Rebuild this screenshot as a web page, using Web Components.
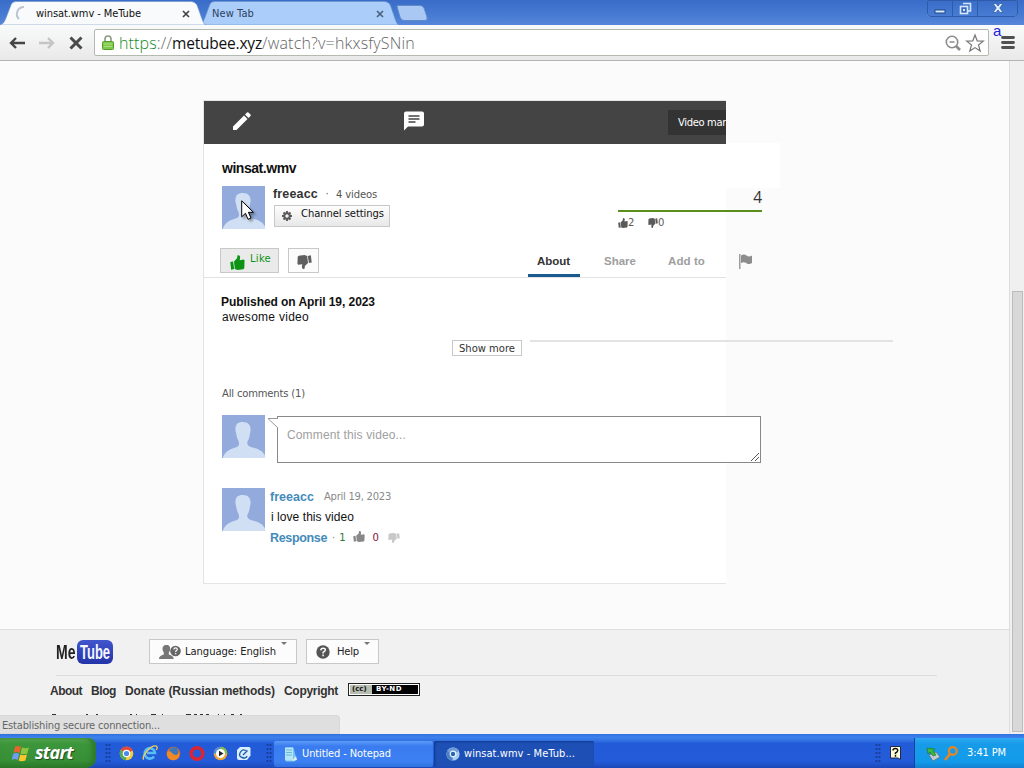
<!DOCTYPE html>
<html lang="en">
<head>
<meta charset="utf-8">
<title>winsat.wmv - MeTube</title>
<style>
    html, body {
        margin: 0;
        width: 1024px;
        height: 768px;
        overflow: hidden;
        background: #fcfcfc;
    }
</style>
</head>
<body>
<desktop-window></desktop-window>

<script>
const TAHOMA = `"DejaVu Sans Condensed", "DejaVu Sans", sans-serif`;
const VERDANA = `"DejaVu Sans", sans-serif`;
const ARIAL = `"Liberation Sans", Arial, sans-serif`;

const THUMB = `<path d="M.3 7.500l3.200-.6L4.800 15l-3.500.6zM4.500 7L8 3.500 8.500.3q3-.8 3 2.400L11 5.500l4.500-.7 1 .9-.3 8.300-1.200 1.200-6.500.8-3-1z"/>`;

const icons = {
    spinner: [16, 16, `<path d="M8 1A7 7 0 0 0 3 13" fill="none" stroke="#b9c5d4" stroke-width="2"/>`],
    close: [8, 8, `<path d="M1 1l6 6M7 1L1 7" stroke="currentColor" stroke-width="1.7"/>`],
    back: [16, 12, `<path d="M7 1L2 6l5 5M2 6h14" fill="none" stroke="currentColor" stroke-width="2.4"/>`],
    forward: [16, 12, `<path d="M9 1l5 5-5 5M14 6H0" fill="none" stroke="currentColor" stroke-width="2.4"/>`],
    stop: [14, 14, `<path d="M1.500 1.500l11 11M12.500 1.500l-11 11" stroke="#4a4a4a" stroke-width="3"/>`],
    lock: [12, 15, `<path d="M3 7V4a3 3 0 0 1 6 0v3" fill="none" stroke="#8d9a80" stroke-width="1.600"/><rect x=".5" y="6.500" width="11" height="8" rx="1" fill="#7fc84c" stroke="#55a02c"/><path d="M2 9h8M2 11.500h8" stroke="#a9e07e"/>`],
    zoom: [16, 16, `<circle cx="7" cy="7" r="5.700" fill="none" stroke="#8c8c8c" stroke-width="1.600"/><path d="M4.500 7h5" stroke="#8c8c8c" stroke-width="1.500"/><path d="M11 11l4 4" stroke="#8c8c8c" stroke-width="2.600"/>`],
    star: [18, 18, `<path d="M9 1l2.200 5.800 6.100.3-4.800 3.900 1.700 6L9 13.600 3.800 17l1.700-6L.7 7.100l6.100-.3z" fill="#fff" stroke="#777" stroke-width="1.200"/>`],
    menu: [14, 13, `<path d="M1.500 1.500h11M1.500 6.500h11M1.500 11.500h11" stroke="#505050" stroke-width="2.800" stroke-linecap="round"/>`],
    minimize: [12, 12, `<rect x="1" y="8" width="10" height="3" fill="#dcecff" stroke="#1d4689"/>`],
    restore: [13, 13, `<path d="M4 1.500h7.500V9H9" fill="none" stroke="#d5e8ff" stroke-width="1.600"/><rect x="1.500" y="4.500" width="7" height="7" fill="#3568bd" stroke="#d5e8ff" stroke-width="1.600"/><rect x="4" y="7" width="2" height="2" fill="#d5e8ff"/>`],
    cross: [12, 12, `<path d="M1 1.500h3l2 2.500 2-2.500h3L7.800 6l3.200 4.500H8L6 8l-2 2.500H1L4.200 6z" fill="#dcecff" stroke="#2a579f" stroke-width=".7"/>`],
    pencil: [18, 18, `<path d="M0 14.500L11 3.500l3.500 3.500-11 11H0zM12 2.500L14 .5q.7-.6 1.400 0L17.500 2.600q.6.700 0 1.400l-2 2z" fill="#fff"/>`],
    message: [20, 20, `<path d="M2 .5h16q2 0 2 2v11q0 2-2 2H4L0 19.500v-17q0-2 2-2z" fill="#fff"/><path d="M4.500 5h11M4.500 8h11M4.500 11h7" stroke="#444" stroke-width="1.400"/>`],
    gear: [10, 10, `<path d="M5 0v10M0 5h10M1.500 1.500l7 7M8.500 1.500l-7 7" stroke="#5a5a5a" stroke-width="1.900"/><circle cx="5" cy="5" r="2.700" fill="#f1f1f1" stroke="#5a5a5a" stroke-width="1.900"/>`],
    up: [17, 16, THUMB],
    down: [17, 16, `<g transform="rotate(180 8.500 8)">${THUMB}</g>`],
    flag: [14, 15, `<path d="M.8 0v15" stroke="#8d8d8d" stroke-width="1.300"/><path d="M2 1.500q3-2 5.500 0t5.500 0V9q-3 2-5.500.2T2 9z" fill="#8d8d8d"/>`],
    grip: [8, 8, `<path d="M0 8l8-8M4 8l4-4" stroke="#555"/>`],
    pointer: [11, 11, `<path d="M11 .5H1L11 10" fill="#fff" stroke="#999"/>`],
    avatar: [43, 43, `<rect width="43" height="43" fill="#92abdc"/><path d="M21 7c6 0 8 4 7.500 9l-1 5c-.4 4-2 4-2.300 7 .5 3 3 4 7 5 6 1.500 9 4 11 8v2H1v-1c2-4.500 5-7 11-9 4-1 5-2 5-5-.4-3-2-4-2.500-8l-1-4C13 10 15 7 21 7z" fill="#d0dff3"/>`],
    cursor: [13, 21, `<path d="M.7.8v16l3.800-3.500 2.500 6 3-1.300-2.600-5.700h5z" fill="#fff" stroke="#000"/>`],
    language: [22, 14, `<path d="M7.500 0c3 0 4 2 3.500 5-.3 2-1.300 2-1.300 4 0 1 5 1 5 5H0c0-4 5-4 5-5 0-2-1-2-1.300-4C3 2 4.500 0 7.500 0z" fill="#777"/><circle cx="16.500" cy="6" r="5.300" fill="#666"/><path d="M14.800 4.500q.2-1.700 1.800-1.700t1.700 1.400q0 1-1.600 2v.9M16.700 8v1.300" fill="none" stroke="#fff" stroke-width="1.200"/>`],
    help: [14, 14, `<circle cx="7" cy="7" r="6.700" fill="#555"/><path d="M4.800 5.400q.1-2.200 2.300-2.200t2.200 1.800q0 1.100-2.200 2.300v1.200M7.100 9.500v1.800" fill="none" stroke="#fff" stroke-width="1.500"/>`],
    caret: [6, 3, `<path d="M0 0h6L3 3z" fill="#777"/>`],
    windows: [18, 17, `<path d="M3 2q3-2 6 0L7.500 8q-3-1.800-6 0z" fill="#e9632c"/><path d="M10 2.500q3.500 1.500 7 0L15.200 8.500q-3.500 1.500-6.700 0z" fill="#8cc63f"/><path d="M1.200 9q3-1.800 6 0L5.700 15q-3-2-6 0z" fill="#6d9df5"/><path d="M8.300 9.500q3.500 1.500 6.700 0L13.300 15.500q-3.500 1.500-6.700 0z" fill="#fbc72d"/>`],
    chrome: [15, 15, `<circle cx="7.500" cy="7.500" r="6.800" fill="#f2cd3c"/><path d="M7.500 7.500L1.500 4A7 7 0 0 1 13.800 4.500z" fill="#df4b3b"/><path d="M7.500 7.500L1.500 4A7 7 0 0 0 7 14.300z" fill="#55a95a"/><circle cx="7.500" cy="7.500" r="3.200" fill="#4c8bec" stroke="#fff" stroke-width="1.200"/>`],
    chromeblue: [14, 14, `<circle cx="7" cy="7" r="6.600" fill="#a7cdf2"/><path d="M7 7L1.200 3.700A6.800 6.800 0 0 1 13 4z" fill="#6d9bd5"/><path d="M7 7L1.200 3.700A6.800 6.800 0 0 0 6.500 13.600z" fill="#4d80c4"/><circle cx="7" cy="7" r="2.800" fill="#2d65b4" stroke="#e8f4ff" stroke-width="1.200"/>`],
    explorer: [16, 16, `<path d="M12 11.500A5.200 5.200 0 1 1 13 8H5" fill="none" stroke="#58bdf5" stroke-width="2.600"/><path d="M2 14.500C-2 13 9-1 14.500 1.200q1.500.8-.2 3.800" fill="none" stroke="#f2cf54" stroke-width="1.300"/>`],
    firefox: [15, 15, `<circle cx="7.500" cy="7.500" r="6.800" fill="#e66a22"/><circle cx="7.800" cy="5.800" r="4.600" fill="#3d78bd"/><path d="M1 6q3-1.500 4.500.5T10 9q3 0 2-4 3 5-1 8-5 3-9-1Q0 9 1 6z" fill="#f08a29"/>`],
    opera: [16, 15, `<ellipse cx="8" cy="7.500" rx="5.800" ry="5.700" fill="none" stroke="#dc2433" stroke-width="3.600"/>`],
    player: [15, 15, `<circle cx="7.500" cy="7.500" r="6.800" fill="#f0a53a"/><path d="M7.500.7a6.800 6.800 0 0 1 6.800 6.800H7.500z" fill="#81bd47"/><path d="M7.500.7A6.800 6.800 0 0 0 .7 7.500h6.800z" fill="#4b8be0"/><circle cx="7.500" cy="7.500" r="4.500" fill="#fff"/><path d="M6 4.700l4.500 2.800L6 10.300z" fill="#222"/>`],
    desktop: [15, 15, `<path d="M4 1h9q1.500 0 1.500 1.500v7L11 14H3q-2 0-2-2V4z" fill="#d9efff"/><path d="M11 5.500Q7 2 4.500 6t1.500 5.500 5-1.500M7 9l4.500-4.500" fill="none" stroke="#245ea8" stroke-width="1.400"/>`],
    notepad: [14, 16, `<path d="M2.500 1.500h8l3 12-2 2H3z" fill="#74c8ea"/><path d="M2 1.500h8v13H2z" fill="#b4e5f7"/><path d="M3 4h6M3 6.500h6M3 9h6" stroke="#6bb4da"/><path d="M9 15l4-5 1 4z" fill="#e5ecee"/>`],
    tip: [11, 14, `<path d="M.5.5h10v13L8 12H.5z" fill="#ffffd5" stroke="#1e2850"/><path d="M3 4.500q0-2 2.400-2t2.300 2Q7.700 6 5.500 7v1.200M5.500 9v1.700" fill="none" stroke="#111" stroke-width="1.500"/>`],
    safely: [14, 15, `<path d="M3 9l7-3 4 5-7 4z" fill="#c2ccd0" stroke="#5c6c78" stroke-width=".7"/><path d="M1 2l8 1-2 2 3 4-3 1-3-4-2 2z" fill="#3cb83d" stroke="#1c7121" stroke-width=".6"/>`],
    magnifier: [14, 15, `<circle cx="8.800" cy="5" r="3.900" fill="none" stroke="#ed851f" stroke-width="2.200"/><path d="M6 8l-5 6" stroke="#ed851f" stroke-width="2.600"/>`]
};

class SvgIcon extends HTMLElement {
    connectedCallback() {
        const [w, h, body] = icons[this.getAttribute("name")];
        const width = this.getAttribute("w") || w;
        const height = this.getAttribute("h") || h;
        this.attachShadow({ mode: "open" }).innerHTML = `
            <style>
                :host { display: block; flex: none; width: ${width}px; height: ${height}px; }
                svg { display: block; overflow: visible; }
            </style>
            <svg width="${width}" height="${height}" viewBox="0 0 ${w} ${h}" preserveAspectRatio="none" fill="currentColor">${body}</svg>
        `;
    }
}

// One line of text, tracked so that it spans the width in its "w" attribute
class TextRun extends HTMLElement {
    connectedCallback() {
        this.attachShadow({ mode: "open" }).innerHTML = `
            <style>
                :host { display: block; flex: none; white-space: nowrap; width: ${this.getAttribute("w")}px; }
                span { display: inline-block; }
            </style>
            <span><slot></slot></span>
        `;
        const span = this.shadowRoot.querySelector("span");
        const natural = span.getBoundingClientRect().width;
        const gap = (this.getAttribute("w") - natural) / this.textContent.length;
        span.style.letterSpacing = gap.toFixed(3) + "px";
    }
}

class BrowserTab extends HTMLElement {
    connectedCallback() {
        const active = this.hasAttribute("active");
        const fill = active ? "#f9fafb" : "#abcdf9";
        this.attachShadow({ mode: "open" }).innerHTML = `
            <style>
                :host {
                    display: grid;
                    flex: none;
                    width: ${active ? 206 : 200}px;
                    height: 25px;
                    font: 11px/16px ${TAHOMA};
                    color: ${active ? "#111" : "#2c4263"};
                }
                :host([active]) { margin-right: -7px; z-index: 1; }
                svg, .row { grid-area: 1 / 1; }
                .row {
                    display: flex;
                    align-items: center;
                    padding: 2px ${active ? "16px 0 16px" : "15px 0 13px"};
                    justify-content: space-between;
                }
                .name { display: flex; gap: 4px; }
                svg-icon { color: ${active ? "#444" : "#4b627f"}; }
            </style>
            <svg width="100%" height="25" viewBox="0 0 206 25" preserveAspectRatio="none">
                <path d="M0 25Q4 24 6 18L11 5Q12 1.500 16 1.500H191Q195 1.500 197 5L202 19Q204 25 206 25z" fill="${fill}" stroke="#6b93c8" stroke-width=".6"/>
            </svg>
            <div class="row"><div class="name"><slot></slot></div><svg-icon name="close"></svg-icon></div>
        `;
    }
}

class TabStrip extends HTMLElement {
    connectedCallback() {
        this.attachShadow({ mode: "open" }).innerHTML = `
            <style>
                :host {
                    display: flex;
                    height: 25px;
                    background: linear-gradient(#386cc8, #4a7dd4 70%, #5787da);
                }
                .new { margin: 5px 0 0 -3px; }
                .controls {
                    display: flex;
                    margin: 0 6px 0 auto;
                    height: 17px;
                    box-sizing: border-box;
                    border: 1px solid #7ba3e3;
                    border-top: 0;
                    border-radius: 0 0 4px 4px;
                    outline: 1px solid #2e5cab;
                    outline-offset: -1px;
                }
                .controls div { display: grid; place-items: center; width: 24px; }
                .controls div + div { border-left: 1px solid #2e5cab; }
                .controls div:last-child { width: 39px; }
            </style>
            <browser-tab active><svg-icon name="spinner"></svg-icon><text-run w="105">winsat.wmv - MeTube</text-run></browser-tab>
            <browser-tab><text-run w="42">New Tab</text-run></browser-tab>
            <svg class="new" width="32" height="16"><path d="M1 1.500Q1 .5 3 .5H24Q27 .5 28 3L31 12Q32 15.500 29 15.500H8Q5 15.500 4 12z" fill="#a9c9f4" stroke="#5f8bcb"/></svg>
            <div class="controls">
                <div><svg-icon name="minimize"></svg-icon></div>
                <div><svg-icon name="restore"></svg-icon></div>
                <div><svg-icon name="cross"></svg-icon></div>
            </div>
        `;
    }
}

class ToolBar extends HTMLElement {
    connectedCallback() {
        this.attachShadow({ mode: "open" }).innerHTML = `
            <style>
                :host {
                    display: flex;
                    align-items: center;
                    position: relative;
                    box-sizing: border-box;
                    height: 36px;
                    padding: 0 9px;
                    background: linear-gradient(#f9fafa, #e9e9e9);
                    border-bottom: 1px solid #b4b4b4;
                }
                .nav { display: flex; align-items: center; gap: 14px; color: #444; width: 85px; }
                .nav :nth-child(2) { color: #c5c5c5; }
                .box {
                    display: flex;
                    align-items: center;
                    box-sizing: border-box;
                    width: 895px;
                    height: 27px;
                    padding: 0 4px 0 7px;
                    background: #fff;
                    border: 1px solid #b5bab0;
                    border-radius: 2px;
                    font: 300 16px/22px "Open Sans", "Noto Sans", sans-serif;
                    color: #666;
                }
                .url { display: flex; margin: 0 auto 0 5px; }
                .host { font-size: 15.500px; font-weight: 400; color: #111; }
                i { font-style: normal; color: #128a26; }
                .box svg-icon + svg-icon { margin-left: 5px; }
                .menu { margin-left: 12px; }
                /* stray letter that hangs over the menu button */
                .extension { position: absolute; left: 993px; top: -2px; font: 15px/16px ${ARIAL}; color: #2222d8; }
            </style>
            <div class="nav"><svg-icon name="back"></svg-icon><svg-icon name="forward"></svg-icon><svg-icon name="stop"></svg-icon></div>
            <div class="box">
                <svg-icon name="lock"></svg-icon>
                <div class="url"><text-run w="53"><i>https</i>://</text-run><text-run class="host" w="90">metubee.xyz</text-run><text-run w="153">/watch?v=hkxsfySNin</text-run></div>
                <svg-icon name="zoom"></svg-icon><svg-icon name="star"></svg-icon>
            </div>
            <svg-icon class="menu" name="menu"></svg-icon>
            <span class="extension">a</span>
        `;
    }
}

class UserAvatar extends HTMLElement {
    connectedCallback() {
        this.attachShadow({ mode: "open" }).innerHTML = `
            <style>:host { display: block; flex: none; width: 43px; height: 43px; }</style>
            <svg-icon name="avatar"></svg-icon>
        `;
    }
}

class PushButton extends HTMLElement {
    connectedCallback() {
        this.attachShadow({ mode: "open" }).innerHTML = `
            <style>
                :host {
                    display: flex;
                    flex: none;
                    align-items: center;
                    box-sizing: border-box;
                    border: 1px solid #c8c8c8;
                    background: #fcfcfc;
                }
            </style>
            <slot></slot>
        `;
    }
}

class WatchCard extends HTMLElement {
    connectedCallback() {
        this.attachShadow({ mode: "open" }).innerHTML = `
            <style>
                :host {
                    display: flex;
                    flex-direction: column;
                    position: relative;
                    box-sizing: border-box;
                    width: 523px;
                    height: 484px;
                    margin: 39px 0 0 203px;
                    border: 1px solid #e4e4e4;
                    border-right: 0;
                    background: #fff;
                    color: #111;
                }
                .patch { position: absolute; left: 522px; top: 42px; width: 54px; height: 45px; background: #fff; }
                .bar { display: flex; flex: none; height: 43px; background: #444; color: #fff; }
                .bar .pencil { margin: 11px 0 0 29px; }
                .bar .message { margin: 10px 0 0 153px; }
                .manager {
                    width: 48px;
                    height: 25px;
                    margin: 9px 0 0 auto;
                    padding-left: 10px;
                    background: #333;
                    font: 10px/25px ${VERDANA};
                }
                .title { margin: 15px 0 0 18px; font: bold 14px/18px ${ARIAL}; }
                .owner { display: flex; width: 558px; height: 44px; margin-top: 9px; padding-left: 18px; box-sizing: border-box; }
                .info { margin-left: 8px; }
                .who { display: flex; align-items: center; height: 16px; font: 10px/16px ${VERDANA}; color: #555; }
                .who > text-run { margin-top: 1px; }
                .who b { font: bold 12.500px/16px ${ARIAL}; color: #333; }
                .who span { width: 18px; text-align: center; }
                .settings { width: 116px; height: 22px; margin: 3px 0 0 1px; padding-left: 7px; background: linear-gradient(#fdfdfd, #e8e8e8); font: 10px/14px ${VERDANA}; color: #111; }
                .settings text-run { margin: -5px 0 0 9px; }
                .stats { width: 144px; margin-left: auto; }
                .views { height: 24px; border-bottom: 2px solid #5b8f1d; text-align: right; font: 15.500px/22px "Open Sans", sans-serif; color: #333; }
                .votes { display: flex; align-items: center; height: 20px; padding-top: 1px; font: 10px/14px ${VERDANA}; color: #5a5a5a; }
                .votes text-run + svg-icon { margin-left: 14px; }
                .actions { display: flex; align-items: flex-start; height: 29px; margin-top: 18px; padding-left: 16px; border-bottom: 1px solid #e2e2e2; flex: none; }
                .like { width: 59px; height: 25px; padding-left: 9px; background: #eaeaea; color: #0c9314; font: 10px/14px ${VERDANA}; }
                .like svg-icon { margin-top: 3px; }
                .like text-run { margin: -4px 0 0 5px; }
                .dislike { width: 31px; height: 25px; margin-left: 9px; padding-left: 8px; color: #606060; }
                .tabs { display: flex; margin-left: 209px; height: 29px; font: bold 11.500px/26px ${ARIAL}; color: #9e9e9e; }
                .tabs .on { padding: 0 10px 0 9px; border-bottom: 3px solid #1b5a8e; color: #333; }
                .tabs .share { margin-left: 24px; }
                .tabs .add { margin-left: 32px; }
                .tabs svg-icon { margin: 6px 0 0 34px; }
                .text { margin: 17px 0 0 18px; font: 12px/15px ${ARIAL}; }
                .text b { display: block; margin-left: -1px; }
                .more { display: flex; align-items: flex-start; width: 689px; margin-top: 15px; padding-left: 248px; box-sizing: border-box; }
                .more push-button { width: 70px; height: 16px; padding: 2px 0 0 6px; font: 10px/14px ${VERDANA}; color: #333; background: #fff; }
                .more hr { width: 363px; height: 2px; margin: 0 0 0 8px; border: 0; background: #e2e4e4; flex: none; }
                .count { margin: 31px 0 0 18px; font: 10px/14px ${VERDANA}; color: #555; }
                .write { display: flex; align-items: flex-start; width: 558px; margin-top: 14px; padding-left: 18px; box-sizing: border-box; }
                .write .pointer { margin: 3px -1px 0 2px; z-index: 1; }
                .area { display: flex; justify-content: space-between; align-items: flex-end; box-sizing: border-box; width: 484px; height: 47px; margin-top: 1px; padding: 0 1px 1px 9px; border: 1px solid #888; background: #fff; font: 12px/16px ${ARIAL}; color: #a0a0a0; }
                .area text-run { align-self: flex-start; margin-top: 10px; }
                .comment { display: flex; margin: 25px 0 0 18px; }
                .body { margin: 1px 0 0 5px; font: 12px/16px ${ARIAL}; }
                .line { display: flex; align-items: center; height: 16px; color: #888; font: 10px/16px ${VERDANA}; }
                .line b { color: #438bba; font: bold 12.500px/16px ${ARIAL}; }
                .said { margin: 4px 0 5px 1px; }
                .date { margin-left: 10px; }
            </style>
            <div class="patch"></div>
            <div class="bar">
                <svg-icon class="pencil" name="pencil"></svg-icon>
                <svg-icon class="message" name="message"></svg-icon>
                <div class="manager"><text-run w="48">Video mar</text-run></div>
            </div>
            <text-run class="title" w="74">winsat.wmv</text-run>
            <div class="owner">
                <user-avatar></user-avatar>
                <div class="info">
                    <div class="who"><b><text-run w="45">freeacc</text-run></b><span>·</span><text-run w="41">4 videos</text-run></div>
                    <push-button class="settings"><svg-icon name="gear"></svg-icon><text-run w="83">Channel settings</text-run></push-button>
                </div>
                <div class="stats">
                    <div class="views">4</div>
                    <div class="votes">
                        <svg-icon name="up" w="10" h="10"></svg-icon><text-run w="6">2</text-run>
                        <svg-icon name="down" w="10" h="10"></svg-icon><text-run w="6">0</text-run>
                    </div>
                </div>
            </div>
            <div class="actions">
                <push-button class="like"><svg-icon name="up" w="15" h="15"></svg-icon><text-run w="21">Like</text-run></push-button>
                <push-button class="dislike"><svg-icon name="down" w="15" h="14" style="margin-top:2px"></svg-icon></push-button>
                <div class="tabs">
                    <text-run class="on" w="33">About</text-run>
                    <text-run class="share" w="32">Share</text-run>
                    <text-run class="add" w="37">Add to</text-run>
                    <svg-icon name="flag"></svg-icon>
                </div>
            </div>
            <div class="text">
                <b><text-run w="154">Published on April 19, 2023</text-run></b>
                <text-run w="87">awesome video</text-run>
            </div>
            <div class="more"><push-button><text-run w="56">Show more</text-run></push-button><hr></div>
            <text-run class="count" w="83">All comments (1)</text-run>
            <div class="write">
                <user-avatar></user-avatar>
                <svg-icon class="pointer" name="pointer"></svg-icon>
                <div class="area"><text-run w="119">Comment this video...</text-run><svg-icon name="grip"></svg-icon></div>
            </div>
            <div class="comment">
                <user-avatar></user-avatar>
                <div class="body">
                    <div class="line"><b><text-run w="44">freeacc</text-run></b><text-run class="date" w="67">April 19, 2023</text-run></div>
                    <text-run class="said" w="83">i love this video</text-run>
                    <div class="line">
                        <b><text-run w="57">Response</text-run></b>
                        <span style="margin:0 4px 0 5px">·</span>
                        <span style="color:#2d7a32">1</span>
                        <svg-icon name="up" w="12" h="11" style="margin:-3px 8px 0 7px"></svg-icon>
                        <span style="color:#8a1036">0</span>
                        <svg-icon name="down" w="12" h="10" style="margin-left:9px;color:#c8c8c8"></svg-icon>
                    </div>
                </div>
            </div>
        `;
    }
}

class SiteFooter extends HTMLElement {
    connectedCallback() {
        this.attachShadow({ mode: "open" }).innerHTML = `
            <style>
                :host {
                    display: block;
                    box-sizing: border-box;
                    height: 105px;
                    margin-top: 45px;
                    border-top: 1px solid #dedede;
                    background: #f1f1f1;
                    color: #333;
                }
                .top { display: flex; align-items: flex-start; box-sizing: border-box; width: 881px; height: 46px; margin-left: 56px; padding-top: 9px; border-bottom: 1px solid #dcdcdc; }
                .logo { display: flex; align-items: center; gap: 2px; height: 25px; width: 93px; font: bold 20px/24px ${ARIAL}; color: #222; }
                .logo span { display: block; width: 19px; }
                .logo i { display: block; width: 36px; height: 24px; border-radius: 6px; background: linear-gradient(#4155cd, #2333a8); color: #f4f6ff; font-style: normal; }
                .logo em { display: block; width: max-content; font-style: normal; transform-origin: 0 50%; }
                push-button { height: 25px; align-items: center; font: 10px/14px ${VERDANA}; color: #222; }
                .lang { width: 148px; padding-left: 9px; margin-right: 9px; }
                .lang text-run { margin-left: 4px; }
                .help { width: 73px; padding-left: 9px; }
                .help text-run { margin-left: 7px; }
                .caret { align-self: flex-start; margin: 2px 0 0 5px; }
                .links { display: flex; gap: 9px; height: 15px; margin: 8px 0 0 50px; font: bold 12px/15px ${ARIAL}; }
                .cc { display: flex; box-sizing: border-box; width: 72px; height: 13px; border: 1px solid #222; outline: 1px solid #fff; outline-offset: -2px; background: #000; color: #fff; font: bold 7px/11px ${VERDANA}; margin: -1px 0 0 1px; }
                .cc span { width: 20px; padding-left: 3px; margin-right: 4px; background: #b7bdb0; color: #111; }
                .cut { display: block; margin: 14px 0 0 50px; }
            </style>
            <div class="top">
                <div class="logo"><span><em style="transform:scaleX(.7)">Me</em></span><i><em style="transform:translateX(3px) scaleX(.65)">Tube</em></i></div>
                <push-button class="lang"><svg-icon name="language"></svg-icon><text-run w="91">Language: English</text-run><svg-icon class="caret" name="caret"></svg-icon></push-button>
                <push-button class="help"><svg-icon name="help"></svg-icon><text-run w="22">Help</text-run><svg-icon class="caret" name="caret"></svg-icon></push-button>
            </div>
            <div class="links">
                <text-run w="32">About</text-run>
                <text-run w="25">Blog</text-run>
                <text-run w="150">Donate (Russian methods)</text-run>
                <text-run w="54">Copyright</text-run>
                <div class="cc"><span>(cc)</span><text-run w="26">BY-ND</text-run></div>
            </div>
            <svg class="cut" width="200" height="3"><path d="M2 1.500h4M36 1.500h2M46 1.500h2M80 1.500h2M86 1.500h1M101 1.500h5M112 1.500h1M136 1.500h5M144 1.500h3M150 1.500h3M156 1.500h3M168 1.500h1M174 1.500h1M181 1.500h3M190 1.500h2" stroke="#333"/></svg>
        `;
    }
}

class PageView extends HTMLElement {
    connectedCallback() {
        this.attachShadow({ mode: "open" }).innerHTML = `
            <style>
                :host { display: flex; position: relative; height: 673px; overflow: hidden; }
                main { width: 1009px; background: #fbfbfb; }
                .scroll { display: flex; box-sizing: border-box; width: 15px; padding: 230px 1px 2px 2px; background: #f0f0f0; border-left: 1px solid #dcdcdc; }
                .scroll div { flex: 1; box-sizing: border-box; border: 1px solid #bcbcbc; background: #d8d8d8; }
                /* status bubble floats over the bottom of the page */
                .status { position: absolute; left: 0; bottom: 0; box-sizing: border-box; width: 340px; height: 19px; padding: 2px 0 0 2px; border: 1px solid #d8d8d8; border-left: 0; border-radius: 0 4px 0 0; background: #dfdfdf; font: 11px/15px ${TAHOMA}; color: #666; }
            </style>
            <main><watch-card></watch-card><site-footer></site-footer></main>
            <div class="scroll"><div></div></div>
            <div class="status"><text-run w="158">Establishing secure connection...</text-run></div>
        `;
    }
}

class TaskBar extends HTMLElement {
    connectedCallback() {
        this.attachShadow({ mode: "open" }).innerHTML = `
            <style>
                :host {
                    display: flex;
                    height: 34px;
                    background: linear-gradient(#2f70df 0, #3c81ec 10%, #3474e4 18%, #225bd8 28%, #245bd9 80%, #1c48b8);
                    font: 11px/16px ${TAHOMA};
                    color: #fff;
                }
                .start {
                    display: flex;
                    align-items: center;
                    gap: 5px;
                    box-sizing: border-box;
                    width: 96px;
                    height: 30px;
                    margin-top: 4px;
                    padding-left: 12px;
                    border-radius: 0 8px 10px 0;
                    background: linear-gradient(#5daa57, #3c963b 20%, #388f36 75%, #2a7729);
                    box-shadow: inset -4px 0 5px #2c7a2b;
                    font: italic bold 18px/22px "Open Sans", "Noto Sans", sans-serif;
                    text-shadow: 1px 1px 1px #234d20;
                }
                .start text-run { margin-top: -2px; }
                .dots { width: 6px; height: 20px; margin: 9px 0 0 9px; background: radial-gradient(circle, #173e9f 1px, transparent 1.200px) 0 0 / 3px 4px; }
                .quick { display: flex; align-items: center; gap: 8px; height: 30px; margin: 4px 0 0 8px; }
                .task { display: flex; align-items: center; gap: 5px; box-sizing: border-box; width: 159px; height: 26px; margin: 7px 0 0 2px; padding-left: 9px; border-radius: 2px; background: linear-gradient(#5b9bf8, #3a7cf0 20%, #3c80f2 80%, #3170de); }
                .on { margin-left: 1px; padding-left: 12px; gap: 4px; width: 160px; background: #1d4fb5; box-shadow: inset 1px 1px 2px #123a8d; }
                .hint { margin: 12px 0 0 9px; }
                .tray { display: flex; align-items: center; gap: 4px; box-sizing: border-box; width: 110px; height: 30px; margin: 4px 0 0 13px; padding-left: 11px; border-left: 1px solid #173f9b; background: linear-gradient(#2faaf3, #179be8 20%, #129bea 80%, #1480ce); }
                .tray text-run { margin-left: 5px; }
            </style>
            <div class="start"><svg-icon name="windows"></svg-icon><text-run w="38">start</text-run></div>
            <div class="dots"></div>
            <div class="quick">
                <svg-icon name="chrome"></svg-icon><svg-icon name="explorer"></svg-icon><svg-icon name="firefox"></svg-icon>
                <svg-icon name="opera"></svg-icon><svg-icon name="player"></svg-icon><svg-icon name="desktop"></svg-icon>
            </div>
            <div class="dots" style="margin-left:15px"></div>
            <div class="task"><svg-icon name="notepad"></svg-icon><text-run w="89">Untitled - Notepad</text-run></div>
            <div class="task on"><svg-icon name="chromeblue"></svg-icon><text-run w="111">winsat.wmv - MeTub...</text-run></div>
            <div class="dots" style="margin-left:auto"></div>
            <svg-icon class="hint" name="tip"></svg-icon>
            <div class="tray"><svg-icon name="safely"></svg-icon><svg-icon name="magnifier"></svg-icon><text-run w="39">3:41 PM</text-run></div>
        `;
    }
}

class DesktopWindow extends HTMLElement {
    connectedCallback() {
        this.attachShadow({ mode: "open" }).innerHTML = `
            <style>
                :host { display: flex; flex-direction: column; position: relative; width: 1024px; height: 768px; overflow: hidden; }
                /* mouse pointer, above everything */
                .cursor { position: absolute; left: 241px; top: 200px; filter: drop-shadow(2px 2px 1px rgba(0, 0, 0, .35)); }
            </style>
            <tab-strip></tab-strip>
            <tool-bar></tool-bar>
            <page-view></page-view>
            <task-bar></task-bar>
            <svg-icon class="cursor" name="cursor"></svg-icon>
        `;
    }
}

customElements.define("svg-icon", SvgIcon);
customElements.define("text-run", TextRun);
customElements.define("browser-tab", BrowserTab);
customElements.define("tab-strip", TabStrip);
customElements.define("tool-bar", ToolBar);
customElements.define("user-avatar", UserAvatar);
customElements.define("push-button", PushButton);
customElements.define("watch-card", WatchCard);
customElements.define("site-footer", SiteFooter);
customElements.define("page-view", PageView);
customElements.define("task-bar", TaskBar);
customElements.define("desktop-window", DesktopWindow);
</script>
</body>
</html>
